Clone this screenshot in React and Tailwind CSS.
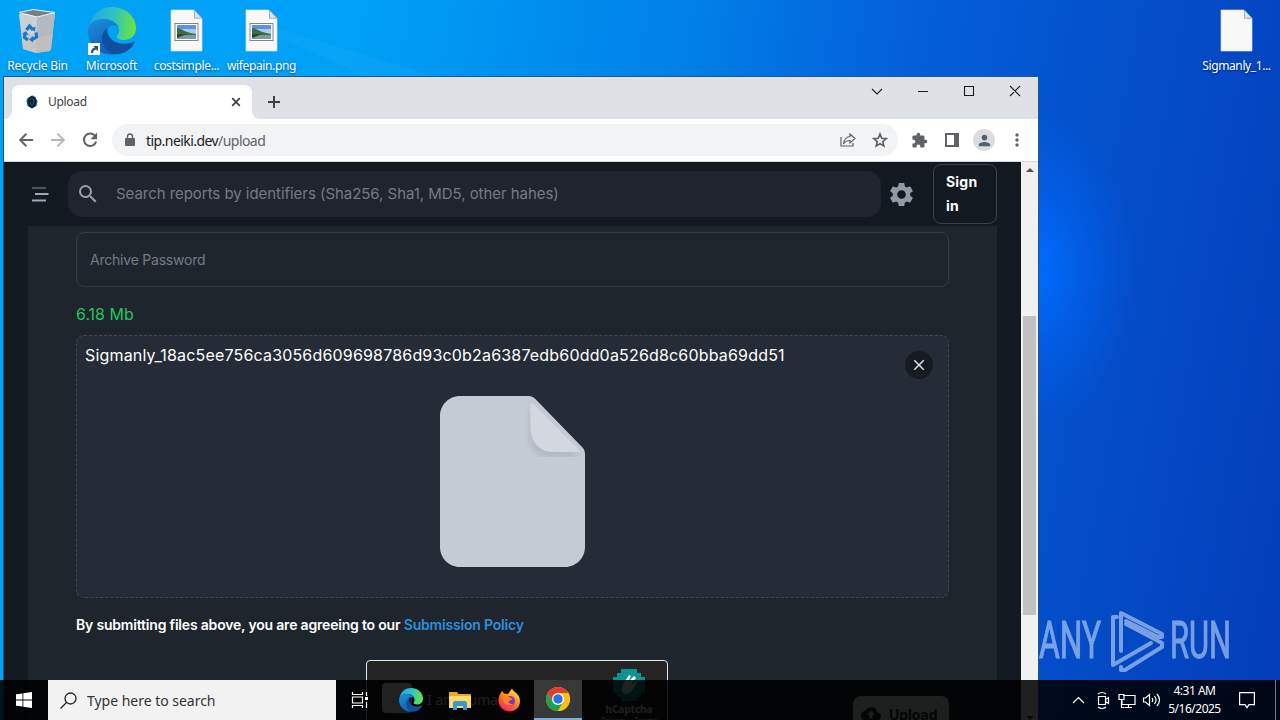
import React from "react";
import {
  MdExtension, MdPerson, MdMoreVert, MdSearch, MdClose, MdSettings, MdBackup,
} from "react-icons/md";

const ui = "font-['Noto_Sans','Open_Sans',sans-serif]";
const page = "font-['Inter',sans-serif]";

function LineIcon({ d, className, width = 2.3 }) {
  return (
    <svg viewBox="0 0 24 24" className={className} fill="none" stroke="currentColor" strokeWidth={width}>
      <path d={d} />
    </svg>
  );
}

function EdgeLogo({ id, className }) {
  return (
    <svg viewBox="0 0 48 48" className={className}>
      <defs>
        <linearGradient id={id + "a"} x1="0" y1="0.3" x2="1" y2="0.4">
          <stop offset="0" stopColor="#27a7e3" />
          <stop offset="0.5" stopColor="#2fc0c8" />
          <stop offset="1" stopColor="#6ae33f" />
        </linearGradient>
        <linearGradient id={id + "b"} x1="0" y1="0" x2="0.4" y2="1">
          <stop offset="0" stopColor="#1b8fdc" />
          <stop offset="1" stopColor="#1160b4" />
        </linearGradient>
      </defs>
      <path d="M1 21C3 8 12 0 24 0c14 0 24 10 24 21 0 8-6 12-12 12-5 0-8-2-7-4 2-2 2-4 2-6 0-7-7-11-15-11C9 12 3 15 1 21z" fill={`url(#${id}a)`} />
      <path d="M0 24C0 16 7 12 15 12c7 0 12 3 15 8-4-3-9-2-11 2-5 9 1 20 11 24-3 1-5 1.500-7 1.500C9 47 0 36 0 24z" fill={`url(#${id}b)`} />
      <path d="M19.500 21C11 26 12 42 26 47c9 1 17-4 20.500-11 .6-1.200-.3-1.700-1.300-1.200C34 40 18 35 19.500 21z" fill="#0f4f9e" />
    </svg>
  );
}

function ChromeLogo() {
  return (
    <svg viewBox="0 0 48 48" className="size-6">
      <circle cx="24" cy="24" r="24" fill="#fbc116" />
      <path d="M3.200 12A24 24 0 0 1 44.800 12H24L13.600 30z" fill="#e33b2e" />
      <path d="M3.200 12A24 24 0 0 0 24 48l10.400-18L24 36l-10.400-6z" fill="#229f4f" />
      <path d="M24 12h20.800A24 24 0 0 1 24 48l10.400-18z" fill="#fbc116" />
      <circle cx="24" cy="24" r="12" fill="#fff" />
      <circle cx="24" cy="24" r="9.500" fill="#2a72e8" />
    </svg>
  );
}

function FirefoxLogo() {
  return (
    <svg viewBox="0 0 24 24" className="size-6">
      <defs>
        <linearGradient id="ffx" x1="0.8" y1="0" x2="0.2" y2="1">
          <stop offset="0" stopColor="#ffe83e" />
          <stop offset="0.45" stopColor="#ff8a1e" />
          <stop offset="0.8" stopColor="#ff3b4e" />
          <stop offset="1" stopColor="#e31587" />
        </linearGradient>
      </defs>
      <path d="M2.500 5.500 4 3l2 2.500 4 .5 4-5.500c1 3 5 4 7 8 3 7-1 14.500-9 15C5 23.500.5 18 .5 12.500c0-3 .8-5 2-7z" fill="url(#ffx)" />
      <circle cx="12" cy="13" r="5" fill="#7a35c4" />
      <path d="M4 9c3-3 6-1 8 .5L15 11l-4 2c-1 2 1 3 4 3-4 3-8 1-9-2z" fill="#ff8421" />
    </svg>
  );
}

function FolderIcon() {
  return (
    <svg viewBox="0 0 22 19" className="h-[19px] w-[22px]">
      <path d="M0 1h8l1.500 2H21a1 1 0 0 1 1 1v13H0z" fill="#e8a926" />
      <path d="M0 5h22v12H0z" fill="#ffd968" />
      <path d="M4 19v-7l1-2h12l1 2v7h-4v-4H8v4z" fill="#3b97d3" />
    </svg>
  );
}

function RecycleBin() {
  return (
    <svg viewBox="0 0 40 44" className="h-[44px] w-[40px]">
      <path d="m1 5 36-1-5 38-14 2L5 40z" fill="#c9d0d6" />
      <path d="m19 7 18-3-4 37-15 3z" fill="#b2b9c0" />
      <path d="m1 3.500 14-3 22 3L19 8z" fill="#777f86" stroke="#f2f6f8" />
      <path d="m3 21 2 19 13 3 15-3 2-15-16 4z" fill="#c7c1bd" opacity=".7" />
      <g fill="none" stroke="#1678c8" strokeWidth="3.200">
        <path d="m8.500 21 3-4 3.500 4M18 23.500l.5 4.500-4 2.500M10 31l-3.500-2.500.5-4.500" />
      </g>
      <path d="m12.500 20 5-2.500-.5 5zM15 27v6.500l-4-3zM4 25l4-3 2.500 4z" fill="#1678c8" />
    </svg>
  );
}

function FileIcon({ picture }) {
  return (
    <svg viewBox="0 0 34 44" className="h-[44px] w-[34px]">
      <path d="M1 1h23l8 8v33H1z" fill="#f8f8f8" stroke="#d5dbe0" strokeWidth=".7" />
      <path d="M24.500 1v8.300H32z" fill="#dde2e6" stroke="#8a949c" strokeWidth=".7" />
      {picture && (
        <>
          <rect x="5" y="14.500" width="23" height="17" fill="#fff" stroke="#7e8790" />
          <rect x="7" y="16" width="19" height="14" fill="#a5cdf1" />
          <rect x="7" y="16" width="19" height="4" fill="#5e93dc" />
          <path d="M7 19c4 0 6 4 19 6v1H7z" fill="#3c6d45" />
          <path d="M7 26h19v4H7z" fill="#7d9aa5" />
          <path d="M7 25h10l-10 4z" fill="#27482f" />
        </>
      )}
    </svg>
  );
}

function DesktopItem({ label, children, labelClass }) {
  return (
    <div className="flex w-[75px] flex-col items-center">
      <div className="flex h-[50px] items-center justify-center">{children}</div>
      <div className={`mt-[2px] whitespace-nowrap text-[12px] leading-4 text-white [text-shadow:0_1px_2px_#0008] ${labelClass || ""}`}>{label}</div>
    </div>
  );
}

function TitleBar() {
  return (
    <div className="flex h-[42px] shrink-0 bg-[#dee1e6]">
      <div className="flex w-2 items-end"><div className="size-2 bg-white"><div className="size-2 rounded-br-lg bg-[#dee1e6]" /></div></div>
      <div className="mt-2 flex h-[34px] w-60 items-center rounded-t-lg bg-white pl-3 pr-[9px]">
        <svg viewBox="0 0 16 16" className="size-4">
          <path d="m8 1 2 1 2 1v2l2 2-1 3 0 2-3 1-2 2-2-2-3-1V9L2 7l1-3 3-1z" fill="#5ab6cf" />
          <ellipse cx="8" cy="8" rx="4.800" ry="6" fill="#06202c" />
          <path d="M6 5c2-1 4 0 4 2s-1 4-2 4-2-2-2-3" fill="none" stroke="#176985" />
        </svg>
        <span className="ml-2 grow text-[12px] tracking-[-0.3px] text-[#3c4043]">Upload</span>
        <LineIcon className="size-[14px] text-[#3c4043]" width={2.9} d="M5.500 5.500l13 13M18.500 5.500l-13 13" />
      </div>
      <div className="flex w-2 items-end"><div className="size-2 bg-white"><div className="size-2 rounded-bl-lg bg-[#dee1e6]" /></div></div>
      <LineIcon className="ml-[5px] mt-4 size-[18px] text-[#3c4043]" width={2.6} d="M12 4v16M4 12h16" />
      <div className="grow" />
      <svg viewBox="0 0 184 28" className="h-7 w-[184px]" fill="none" stroke="#1c1c1c" strokeWidth="1.100">
        <path d="m18 12 5 5 5-5M64 14.500h10M110.500 9.500h9v9h-9zM156 9l10 10M166 9l-10 10" />
      </svg>
    </div>
  );
}

function Toolbar() {
  return (
    <div className="flex h-[43px] shrink-0 items-center border-b border-[#d5d7da] bg-white text-[#5f6368]">
      <LineIcon className="ml-3 size-5" d="M20.500 12H5M12.500 4.500 5 12l7.500 7.500" />
      <LineIcon className="ml-3 size-5 text-[#b5b7b9]" d="M3.500 12H19M11.500 4.500 19 12l-7.500 7.500" />
      <svg viewBox="0 0 24 24" className="ml-3 size-5"><path d="M18.500 7.500A7.500 7.500 0 1 0 19.400 14" fill="none" stroke="currentColor" strokeWidth="2.400" /><path d="M20.500 3v8h-8z" fill="currentColor" /></svg>
      <div className="ml-3 flex h-8 w-[786px] items-center rounded-full bg-[#f1f3f4] pl-[11px] pr-[9px]">
        <svg viewBox="0 0 14 14" className="size-[14px]"><path d="M2.500 5.500h9v7h-9z" fill="#5f6368" stroke="#5f6368" strokeLinejoin="round" /><path d="M4.500 5V3.500a2.500 2.500 0 0 1 5 0V5" fill="none" stroke="#5f6368" strokeWidth="1.400" /></svg>
        <span className="ml-[9px] grow text-[14px] tracking-[-0.56px] text-[#202124]">tip.neiki.dev<span className="text-[#5f6368]">/upload</span></span>
        <svg viewBox="0 0 16 16" className="mr-[15px] size-4" fill="none" stroke="#5f6368" strokeWidth="1.200">
          <path d="M1 5v9h12v-3" />
          <path d="M10 2l5 4.500-5 4.500V8.500C7 8.500 5 9.500 3.500 12 4 8 6 5 10 4.500z" />
        </svg>
        <LineIcon className="size-[18px]" width={2.200} d="m12 4 2.300 5.600 6 .5-4.600 4 1.400 5.900-5.100-3.200L6.900 20l1.400-5.900-4.600-4 6-.5z" />
      </div>
      <MdExtension className="ml-[13px] size-[17px]" />
      <svg viewBox="0 0 14 14" className="ml-[17px] size-[14px]">
        <path d="M1 1h12v12H1z" fill="none" stroke="#5f6368" strokeWidth="2" /><path d="M9 0h5v14H9z" fill="#5f6368" />
      </svg>
      <div className="ml-[14px] flex size-[22px] items-center justify-center rounded-full bg-[#dadce0]"><MdPerson className="size-[17px] text-[#51606f]" /></div>
      <MdMoreVert className="ml-3 size-5" />
    </div>
  );
}

function PageHeader() {
  return (
    <div className="flex h-16 shrink-0 items-center bg-[#131920] pr-6">
      <svg viewBox="0 0 18 18" className="ml-[27px] size-[18px]" fill="none" strokeWidth="2.200">
        <path d="M1 3h14" stroke="#4d535c" />
        <path d="M4 9h13.500M1 15.500h14" stroke="#a0a7b1" />
      </svg>
      <div className="ml-[19px] flex h-[46px] w-[813px] items-center rounded-[14px] bg-[#1f242e] pl-2">
        <MdSearch className="size-6 text-[#98a0aa]" />
        <span className="ml-4 text-[15px] tracking-[-0.045px] text-[#747b86]">Search reports by identifiers (Sha256, Sha1, MD5, other hahes)</span>
      </div>
      <MdSettings className="ml-[6px] size-[29px] text-[#929aa5]" />
      <div className="ml-[17px] flex h-[60px] w-16 items-center rounded-lg border border-[#3b424a] pl-3 text-[14px] font-bold leading-6 tracking-[0.2px] text-white">Sign<br />in</div>
    </div>
  );
}

function UploadPreview() {
  return (
    <div className="mt-[9px] h-[263px] shrink-0 rounded-lg border border-dashed border-[#414851] bg-[#262c37] px-2">
      <div className="flex justify-between">
        <span className="mt-[7px] text-[16px] leading-6 tracking-[0.178px] text-white">Sigmanly_18ac5ee756ca3056d609698786d93c0b2a6387edb60dd0a526d8c60bba69dd51</span>
        <div className="mr-[7px] mt-[15px] flex size-7 items-center justify-center rounded-full bg-[#151b21]"><MdClose className="size-[18px] text-[#dce1e6]" /></div>
      </div>
      <div className="flex justify-center">
        <svg viewBox="0 0 146 171" className="mr-px mt-[17px] h-[171px] w-[145px]" preserveAspectRatio="none">
          <defs><filter id="fold"><feDropShadow dx="-1" dy="6" stdDeviation="4" floodColor="#87909b" floodOpacity=".35" /></filter>
            <clipPath id="sheet"><path d="M20 0h69c3 0 5 1 7 3l47 48c2 2 3 4 3 7v93c0 11-9 20-20 20H20C9 171 0 162 0 151V20C0 9 9 0 20 0z" /></clipPath></defs>
          <g clipPath="url(#sheet)">
            <path d="M0 0h146v171H0z" fill="#c5cbd5" />
            <path d="M91 9v23c0 13 9 24 22 24h26c2 0 2-1 1-2L94 8c-1-1-3-1-3 1z" fill="#d2d7e0" filter="url(#fold)" />
          </g>
        </svg>
      </div>
    </div>
  );
}

function Captcha() {
  return (
    <div className="ml-[290px] mt-[25px] flex h-[76px] w-[302px] rounded border border-[#e4e7eb] bg-[#242424] pl-[15px] text-[#e8e8e8]">
      <div className="mt-[22px] h-[30px] w-[30px] rounded bg-[#fafafa]" />
      <span className="ml-[15px] mt-[29px] grow text-[14px] leading-5">I am human</span>
      <div className="flex w-[76px] flex-col items-center pt-2 text-[10px] font-bold leading-3">
        <svg viewBox="0 0 32 32" className="size-8">
          <path d="M8 0h16v4h4v4h4v16h-4v4h-4v4H8v-4H4v-4H0V8h4V4h4z" fill="#0a968f" />
          <path d="m10 15 6-9 2 1-3 6 6-6 2 2-5 7 5-4 1 2-6 9c-4 4-9 1-10-2z" fill="#f4ffff" />
        </svg>
        <span className="mt-[2px]">hCaptcha</span>
        <span className="text-[8px] font-normal">Privacy - Terms</span>
      </div>
    </div>
  );
}

function BrowserWindow() {
  return (
    <div className={`absolute left-[3px] top-[76px] flex h-[652px] w-[1036px] flex-col border border-[#2a5577] ${ui}`}>
      <TitleBar />
      <Toolbar />
      <div className="flex min-h-0 grow">
        <div className={`flex w-[1017px] flex-col overflow-hidden bg-[#131920] ${page}`}>
          <PageHeader />
          <div className="mx-6 flex h-[520px] shrink-0 flex-col bg-[#1e252d] px-12 pt-[6px]">
            <div className="flex h-[55px] shrink-0 items-center rounded-lg border border-[#343c45] pb-px pl-[13px] text-[14px] tracking-[-0.22px] text-[#747b86]">Archive Password</div>
            <div className="mt-[15px] h-6 shrink-0 text-[16px] leading-6 text-[#23c463]">6.18 Mb</div>
            <UploadPreview />
            <div className="mt-[16px] h-[21px] shrink-0 text-[14px] font-semibold leading-[21px] tracking-[-0.19px] text-white">By submitting files above, you are agreeing to our <span className="text-[#2c8fdc]">Submission Policy</span></div>
            <div className="flex shrink-0">
              <div className={ui}><Captcha /></div>
              <div className="ml-[185px] mt-[61px] flex h-9 w-24 items-center gap-2 rounded-lg bg-[#dfe3e8] pl-2 text-[14px] font-bold text-[#1f2937]"><MdBackup className="size-5" />Upload</div>
            </div>
          </div>
        </div>
        <div className="flex w-[17px] flex-col items-center bg-[#f1f1f1] pt-[6px]">
          <svg viewBox="0 0 8 4" className="h-1 w-2 shrink-0"><path d="m0 4 4-4 4 4z" fill="#505050" /></svg>
          <div className="mt-[144px] h-[299px] w-[13px] shrink-0 bg-[#c1c1c1]" />
          <svg viewBox="0 0 8 4" className="mt-[101px] h-1 w-2 shrink-0"><path d="m0 0 4 4 4-4z" fill="#505050" /></svg>
        </div>
      </div>
    </div>
  );
}

function Watermark() {
  return (
    <svg viewBox="0 0 220 66" className="absolute left-[1038px] top-[608px] h-[66px] w-[220px] opacity-55">
      <g fill="#d7e8ff" stroke="#d7e8ff" strokeWidth="1" className="font-['Roboto',sans-serif]" fontSize="51">
        <text x="1" y="50" textLength="62" lengthAdjust="spacingAndGlyphs">ANY</text>
        <text x="132" y="50" textLength="61" lengthAdjust="spacingAndGlyphs">RUN</text>
      </g>
      <g fill="none" stroke="#d7e8ff" strokeWidth="4" strokeLinejoin="round" strokeLinecap="round">
        <path d="M83 43V5l41 21v3h-4L88 13" />
        <path d="M79 9h-4v48l38-22" />
        <path d="m83 59v3h4l37-23v-4L88 16" />
      </g>
    </svg>
  );
}

function Taskbar() {
  return (
    <div className={`absolute inset-x-0 bottom-0 flex h-10 bg-[rgba(0,0,0,0.87)] text-white ${ui}`}>
      <div className="flex w-12 items-center justify-center">
        <svg viewBox="0 0 16 16" className="size-4" fill="#fff"><path d="M0 2.300 6.500 1.400V7.600H0zM7.300 1.300 16 0v7.600H7.300zM0 8.400h6.500v6.200L0 13.700zM7.300 8.400H16V16l-8.700-1.300z" /></svg>
      </div>
      <div className="flex w-72 items-center bg-[#f2f2f2] pl-3">
        <svg viewBox="0 0 17 17" className="size-[17px]" fill="none" stroke="#222" strokeWidth="1.300"><circle cx="10.500" cy="6.500" r="5.500" /><path d="m6.500 10.500-6 6" /></svg>
        <span className="ml-[10px] text-[14px] tracking-[-0.02px] text-[#333]">Type here to search</span>
      </div>
      <div className="flex w-12 items-center justify-center">
        <svg viewBox="0 0 18 16" className="h-4 w-[18px]" fill="none" stroke="#fff" strokeWidth="1.200"><path d="M1.500 0v2.500h10V0M1.500 5h10v6h-10zM1.500 16v-2.500h10V16M15.500 0v4M15.500 10v6" /><path d="M14 5h3v3h-3z" fill="#fff" stroke="none" /></svg>
      </div>
      <div className="flex w-[54px] items-center justify-center"><EdgeLogo id="tb" className="size-6" /></div>
      <div className="flex w-11 items-center justify-center"><FolderIcon /></div>
      <div className="flex w-[52px] items-center justify-center pl-[3px]"><FirefoxLogo /></div>
      <div className="flex w-12 items-center justify-center border-b-2 border-[#76b0e3] bg-[#383838]"><ChromeLogo /></div>
      <div className="grow" />
      <svg viewBox="0 0 90 20" className="mt-[10px] h-5 w-[90px]" fill="none" stroke="#fff" strokeWidth="1.200">
        <path d="m1 13 5.500-5.500L12 13" />
        <path d="M26.500 6.500h7v8h-7zM33.500 9.500l3-2v6l-3-2M26 4q4-3 8 0M26 17q4 3 8 0" />
        <path d="M51 5.500h12v9H50v-4M53 17.500h7M56.500 14.500v3M47 4.500h5v5h-5zM49.500 9.500v8h3" />
        <path d="M71.500 8h2l4-3.500v11l-4-3.500h-2zM80 8q1.500 2 0 4M82.500 6q3 4 0 8M85 4q5 6 0 12" />
      </svg>
      <div className="flex w-[68px] flex-col items-center pr-[3px] pt-[2px] text-center text-[12px] leading-[18px] tracking-[-0.5px]"><span>4:31 AM</span><span>5/16/2025</span></div>
      <div className="ml-[9px] flex w-9 pt-3">
        <svg viewBox="0 0 16 17" className="h-[17px] w-4" fill="none" stroke="#fff" strokeWidth="1.200"><path d="M.6.600h14.800v12H10l-2 3-2-3H.600z" /></svg>
      </div>
      <div className="w-[5px] border-l border-[#777]" />
    </div>
  );
}

export default function App() {
  return (
    <div className="relative h-[720px] w-[1280px] overflow-hidden bg-[radial-gradient(ellipse_100px_160px_at_1035px_270px,#006cff_0%,#0064f499_45%,#0060f000_100%),linear-gradient(100deg,#00a3f6_0%,#00a0f6_26%,#0080e8_49%,#045fda_65%,#0450cb_80%,#043db9_100%)]">
      <svg viewBox="0 0 1280 80" className="absolute left-0 top-0 h-20 w-[1280px]"><path d="M270 26 440 78H370L270 34z" fill="#28b4ff" opacity=".18" /></svg>
      <div className={`relative flex justify-between pr-[6px] pt-[6px] ${ui}`}>
        <div className="flex">
          <DesktopItem label="Recycle Bin" labelClass="tracking-[-0.25px]"><RecycleBin /></DesktopItem>
          <div className="-ml-px flex">
            <DesktopItem label="Microsoft" labelClass="tracking-[-0.2px]">
              <div className="relative size-12"><EdgeLogo id="dt" className="size-12" />
                <svg viewBox="0 0 12 12" className="absolute bottom-0 left-0 size-3"><path d="M0 0h12v12H0z" fill="#fff" /><path d="M3 10c0-3 1-5 4-5L5 3h5v5L8 6.500C6 7 5 8 5 10z" fill="#21538c" /></svg>
              </div>
            </DesktopItem>
            <DesktopItem label="costsimple..." labelClass="tracking-[-0.35px]"><FileIcon picture /></DesktopItem>
            <DesktopItem label="wifepain.png" labelClass="tracking-[-0.35px]"><FileIcon picture /></DesktopItem>
          </div>
        </div>
        <DesktopItem label="Sigmanly_1..." labelClass="tracking-[-0.4px]"><FileIcon /></DesktopItem>
      </div>
      <BrowserWindow />
      <Watermark />
      <Taskbar />
    </div>
  );
}
